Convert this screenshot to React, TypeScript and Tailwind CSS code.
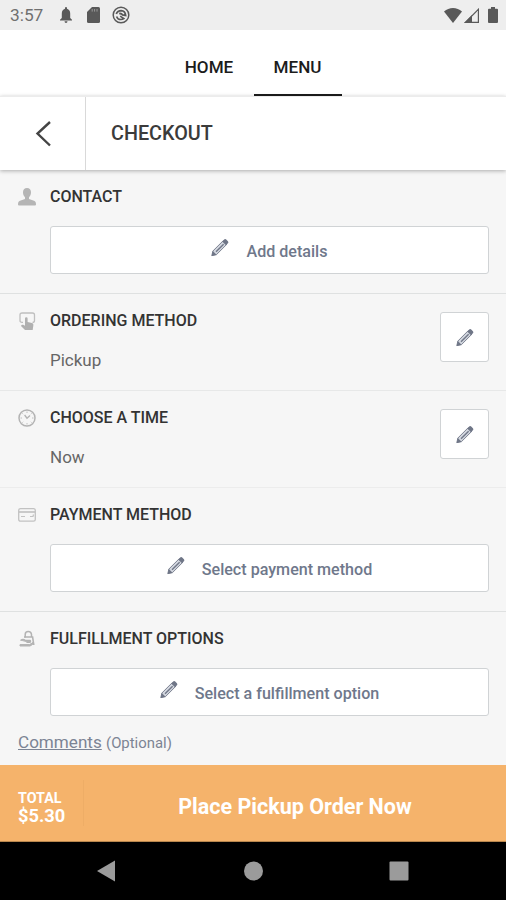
import React from "react";

type SectionProps = {
    icon: React.ReactNode;
    title: string;
    className: string;
    action?: string;
    value?: string;
};

const Pencil_icon = () => (
    <svg width="18" height="19" viewBox="0 0 20 20" fill="none" className="shrink-0 text-[#6f7687]">
        <path d="M2 14 L13.5 2.5 L17.5 6.5 L6 18 L1 19 Z" fill="#d3d7df" stroke="currentColor" strokeWidth="1" strokeLinejoin="round" />
        <path d="M12.4 3.4 L15 .8 Q16 .1 17.2 1.3 L18.8 3 Q19.8 4.2 19 5 L16.7 7.4 Z" fill="currentColor" />
        <path d="M.6 19.4 L2 13.8 L6.200 18 Z" fill="currentColor" />
        <path d="M5.6 14.8 L14 6.4" stroke="currentColor" strokeWidth="1.5" />
    </svg>
);

const Person_icon = () => (
    <svg width="18" height="18" viewBox="0 0 18 18" fill="#b5b5b5">
        <path d="M9 0C6.5 0 4.8 1.7 5 4.6C5.1 6.7 5.8 8.3 7 9.3V11L2 12.7C.6 13.3 0 14.2 0 16.5Q0 17.5 1 17.5H17Q18 17.5 18 16.5C18 14.2 17.4 13.3 16 12.7L11 11V9.3C12.2 8.3 12.9 6.7 13 4.6C13.2 1.7 11.5 0 9 0Z" />
    </svg>
);

const Touch_icon = () => (
    <svg width="18" height="18" viewBox="0 0 18 18" fill="none">
        <path d="M5 10.4H4Q2 10.4 2 8.4V3Q2 1 4 1H14.5Q16.5 1 16.5 3V8.4Q16.5 10.4 14.5 10.4" stroke="#bfbfbf" strokeWidth="1.3" />
        <path d="M7 6.6Q7 5.2 8.3 5.2T9.6 6.6V10L14 11Q15.6 11.5 15.4 13L14.7 18H7L3 14Q3.5 12.2 5.2 12.8L7 13.8Z" fill="#b0b0b0" />
    </svg>
);

const Clock_icon = () => (
    <svg width="18" height="18" viewBox="0 0 18 18" fill="none" stroke="#b3b3b3">
        <circle cx="9" cy="9" r="8" strokeWidth="1.5" />
        <path d="M6.6 6L9 9.2L12 6.4" strokeWidth="1.3" />
        <path d="M9 2.5V4M9 14V15.5M2.5 9H4M14 9H15.5M4.4 4.4L5.2 5.2M13.6 4.4L12.8 5.2M4.4 13.6L5.2 12.8M13.6 13.6L12.8 12.8" strokeWidth=".8" />
    </svg>
);

const Card_icon = () => (
    <svg width="18" height="18" viewBox="0 0 18 18" fill="none" stroke="#c2c2c2">
        <rect x=".7" y="2.6" width="16.6" height="12.6" rx="1.8" strokeWidth="1.3" />
        <path d="M.7 6H17.3" strokeWidth="1.7" />
        <path d="M3 10.5H7M12 10.5H15L15.5 8.5" strokeWidth="1.2" />
    </svg>
);

const Bag_icon = () => (
    <svg width="18" height="18" viewBox="0 0 18 18" fill="none" stroke="#b3b3b3">
        <path d="M7.2 7.5V4.5Q7.2 1.5 10.2 1.5T13.5 4.5V7" strokeWidth="1.5" />
        <path d="M6 7H14.6L15.8 15" strokeWidth="1.6" />
        <path d="M2.5 10.5Q5 8.5 7.5 10.5H12Q13 11 12 12.2H8.5" fill="#bdbdbd" strokeWidth="1.4" />
        <path d="M2 14.6H11.5L15 12.5Q16.4 13 14.5 14.5L12 16H2Z" fill="#b8b8b8" strokeWidth="1" />
    </svg>
);

const Status_bar = () => (
    <div className="flex h-[30px] shrink-0 items-center justify-between bg-[#eeeeee] pr-[8px] pl-[10px] text-[#595959]">
        <div className="flex items-center">
            <span className="w-[50px] pt-[1px] text-[17.3px] leading-[29px] text-[#707070]">3:57</span>
            <svg width="12" height="16" viewBox="0 0 12 16" fill="currentColor">
                <path d="M6 0Q7 0 7 1V1.7Q10.2 2.6 10.2 6.5V11L12 12.8V13.5H0V12.8L1.8 11V6.5Q1.8 2.6 5 1.7V1Q5 0 6 0ZM4.5 14.3H7.5Q7.5 16 6 16T4.5 14.3Z" />
            </svg>
            <svg width="13" height="16" viewBox="0 0 13 16" className="ml-[15px]">
                <path d="M5 0H11.5Q13 0 13 1.5V14.5Q13 16 11.5 16H1.5Q0 16 0 14.5V5Z" fill="currentColor" />
                <path d="M5.2 2V4.6M7.6 2V4.6M10 2V4.6" stroke="#999" strokeWidth="1" />
            </svg>
            <svg width="18" height="18" viewBox="0 0 18 18" fill="none" stroke="currentColor" className="ml-[12px]">
                <circle cx="9" cy="9" r="7.8" strokeWidth="1.5" />
                <path d="M4.3 8Q5.5 4.6 9.2 4.6Q13.2 4.8 13.6 9.4L10.6 9Q9.5 7.2 7.2 7.6" strokeWidth="1.8" />
                <path d="M4.6 10.4Q5.6 13.6 9 13.5Q10.6 13.5 11.8 12.6L8.2 10.2" strokeWidth="1.6" />
            </svg>
        </div>
        <div className="flex items-center">
            <svg width="18" height="15" viewBox="0 0 18 15" fill="currentColor">
                <path d="M0 3.5Q4 0 9 0T18 3.5L9 15Z" />
            </svg>
            <svg width="15" height="15" viewBox="0 0 15 15" className="ml-[2px]">
                <path d="M1.5 14.4H14.4V1.3Z" fill="none" stroke="currentColor" strokeWidth="1.2" />
                <path d="M0 15L8 7V15Z" fill="currentColor" />
            </svg>
            <svg width="10" height="16" viewBox="0 0 10 16" fill="currentColor" className="ml-[9px]">
                <path d="M3 0H7V1.7H9Q10 1.7 10 2.7V15Q10 16 9 16H1Q0 16 0 15V2.7Q0 1.7 1 1.7H3Z" />
            </svg>
        </div>
    </div>
);

const Section = ({ icon, title, className, action, value }: SectionProps) => (
    <section className={`flex shrink-0 pr-[17px] pl-[18px] ${className}`}>
        <div className="mt-[18px] w-8 shrink-0">{icon}</div>
        <div className="min-w-0 flex-1">
            <h2 className="mt-[16px] text-[16px] leading-[22px] font-medium text-[#333333]">{title}</h2>
            {action && (
                <button className="mt-[18px] flex h-[48px] w-full items-center justify-center rounded-[3px] border border-[#d0d3d5] bg-white text-[16.1px] font-medium text-[#6f788b]">
                    <span className="mr-[17px] mb-[5px]">
                        <Pencil_icon />
                    </span>
                    <span className="mt-[4px]">{action}</span>
                </button>
            )}
            {value && <p className="mt-[17px] text-[17px] leading-[22px] text-[#666666]">{value}</p>}
        </div>
        {value && (
            <button className="mt-[18px] flex h-[50px] w-[49px] items-center justify-center rounded-[3px] border border-[#d0d3d5] bg-white">
                <Pencil_icon />
            </button>
        )}
    </section>
);

const App = () => {
    return (
        <div className="flex h-[900px] w-[506px] flex-col overflow-hidden bg-[#f6f6f6] font-[Roboto,sans-serif]">
            <Status_bar />
            <nav className="flex h-[66px] shrink-0 justify-center bg-white pl-[1px] text-[17.1px] font-medium text-[#1c1c1c]">
                <a className="flex w-[88px] items-center justify-center pt-[9px] pr-[1px]">HOME</a>
                <a className="flex w-[88px] items-center justify-center border-b-2 border-[#1c1c1c] pt-[11px]">MENU</a>
            </nav>
            <header className="relative flex h-[74px] shrink-0 border-t border-[#ececec] bg-white shadow-[0_1px_4px_rgba(0,0,0,0.3)]">
                <button className="flex w-[86px] items-center justify-center border-r border-[#d9d9d9]">
                    <svg width="16" height="26" viewBox="0 0 16 26" fill="none" stroke="#444" strokeWidth="2.4">
                        <path d="M15 1L2.5 12.5L15 24.5" />
                    </svg>
                </button>
                <h1 className="pl-[25px] text-[19.8px] leading-[73px] font-medium text-[#3b3b3b]">CHECKOUT</h1>
            </header>
            <main className="flex h-[595px] shrink-0 flex-col">
                <Section icon={<Person_icon />} title="CONTACT" action="Add details" className="h-[124px] border-b border-[#dfe1e1]" />
                <Section icon={<Touch_icon />} title="ORDERING METHOD" value="Pickup" className="h-[97px] border-b border-[#e7e8e8]" />
                <Section icon={<Clock_icon />} title="CHOOSE A TIME" value="Now" className="h-[97px] border-b border-[#ececec]" />
                <Section icon={<Card_icon />} title="PAYMENT METHOD" action="Select payment method" className="h-[124px] border-b border-[#dfe1e1]" />
                <Section icon={<Bag_icon />} title="FULFILLMENT OPTIONS" action="Select a fulfillment option" className="h-[119px]" />
                <p className="pl-[18px] text-[17.1px] leading-[23px] text-[#7c8494]">
                    <a className="underline">Comments</a> <span className="text-[14.9px]">(Optional)</span>
                </p>
            </main>
            <footer className="flex h-[77px] shrink-0 items-center border-b border-[#b9874e] bg-[#f5b36b] text-white">
                <div className="w-[84px] border-r border-[#eead66] pt-[10px] pl-[18px] font-bold">
                    <div className="text-[14.3px] leading-[16px]">TOTAL</div>
                    <div className="text-[18.3px] leading-[20px]">$5.30</div>
                </div>
                <button className="flex-1 pt-[9px] text-[21.5px] font-bold">Place Pickup Order Now</button>
            </footer>
            <div className="flex h-[58px] shrink-0 items-center bg-black text-[#9b9b9b]">
                <svg width="506" height="22" viewBox="0 0 506 22" fill="currentColor">
                    <path d="M97 11L115 .5V21.5Z" />
                    <circle cx="253.5" cy="11" r="9.5" />
                    <rect x="389.5" y="1.5" width="19" height="19" rx="1" />
                </svg>
            </div>
        </div>
    );
};

export default App;
